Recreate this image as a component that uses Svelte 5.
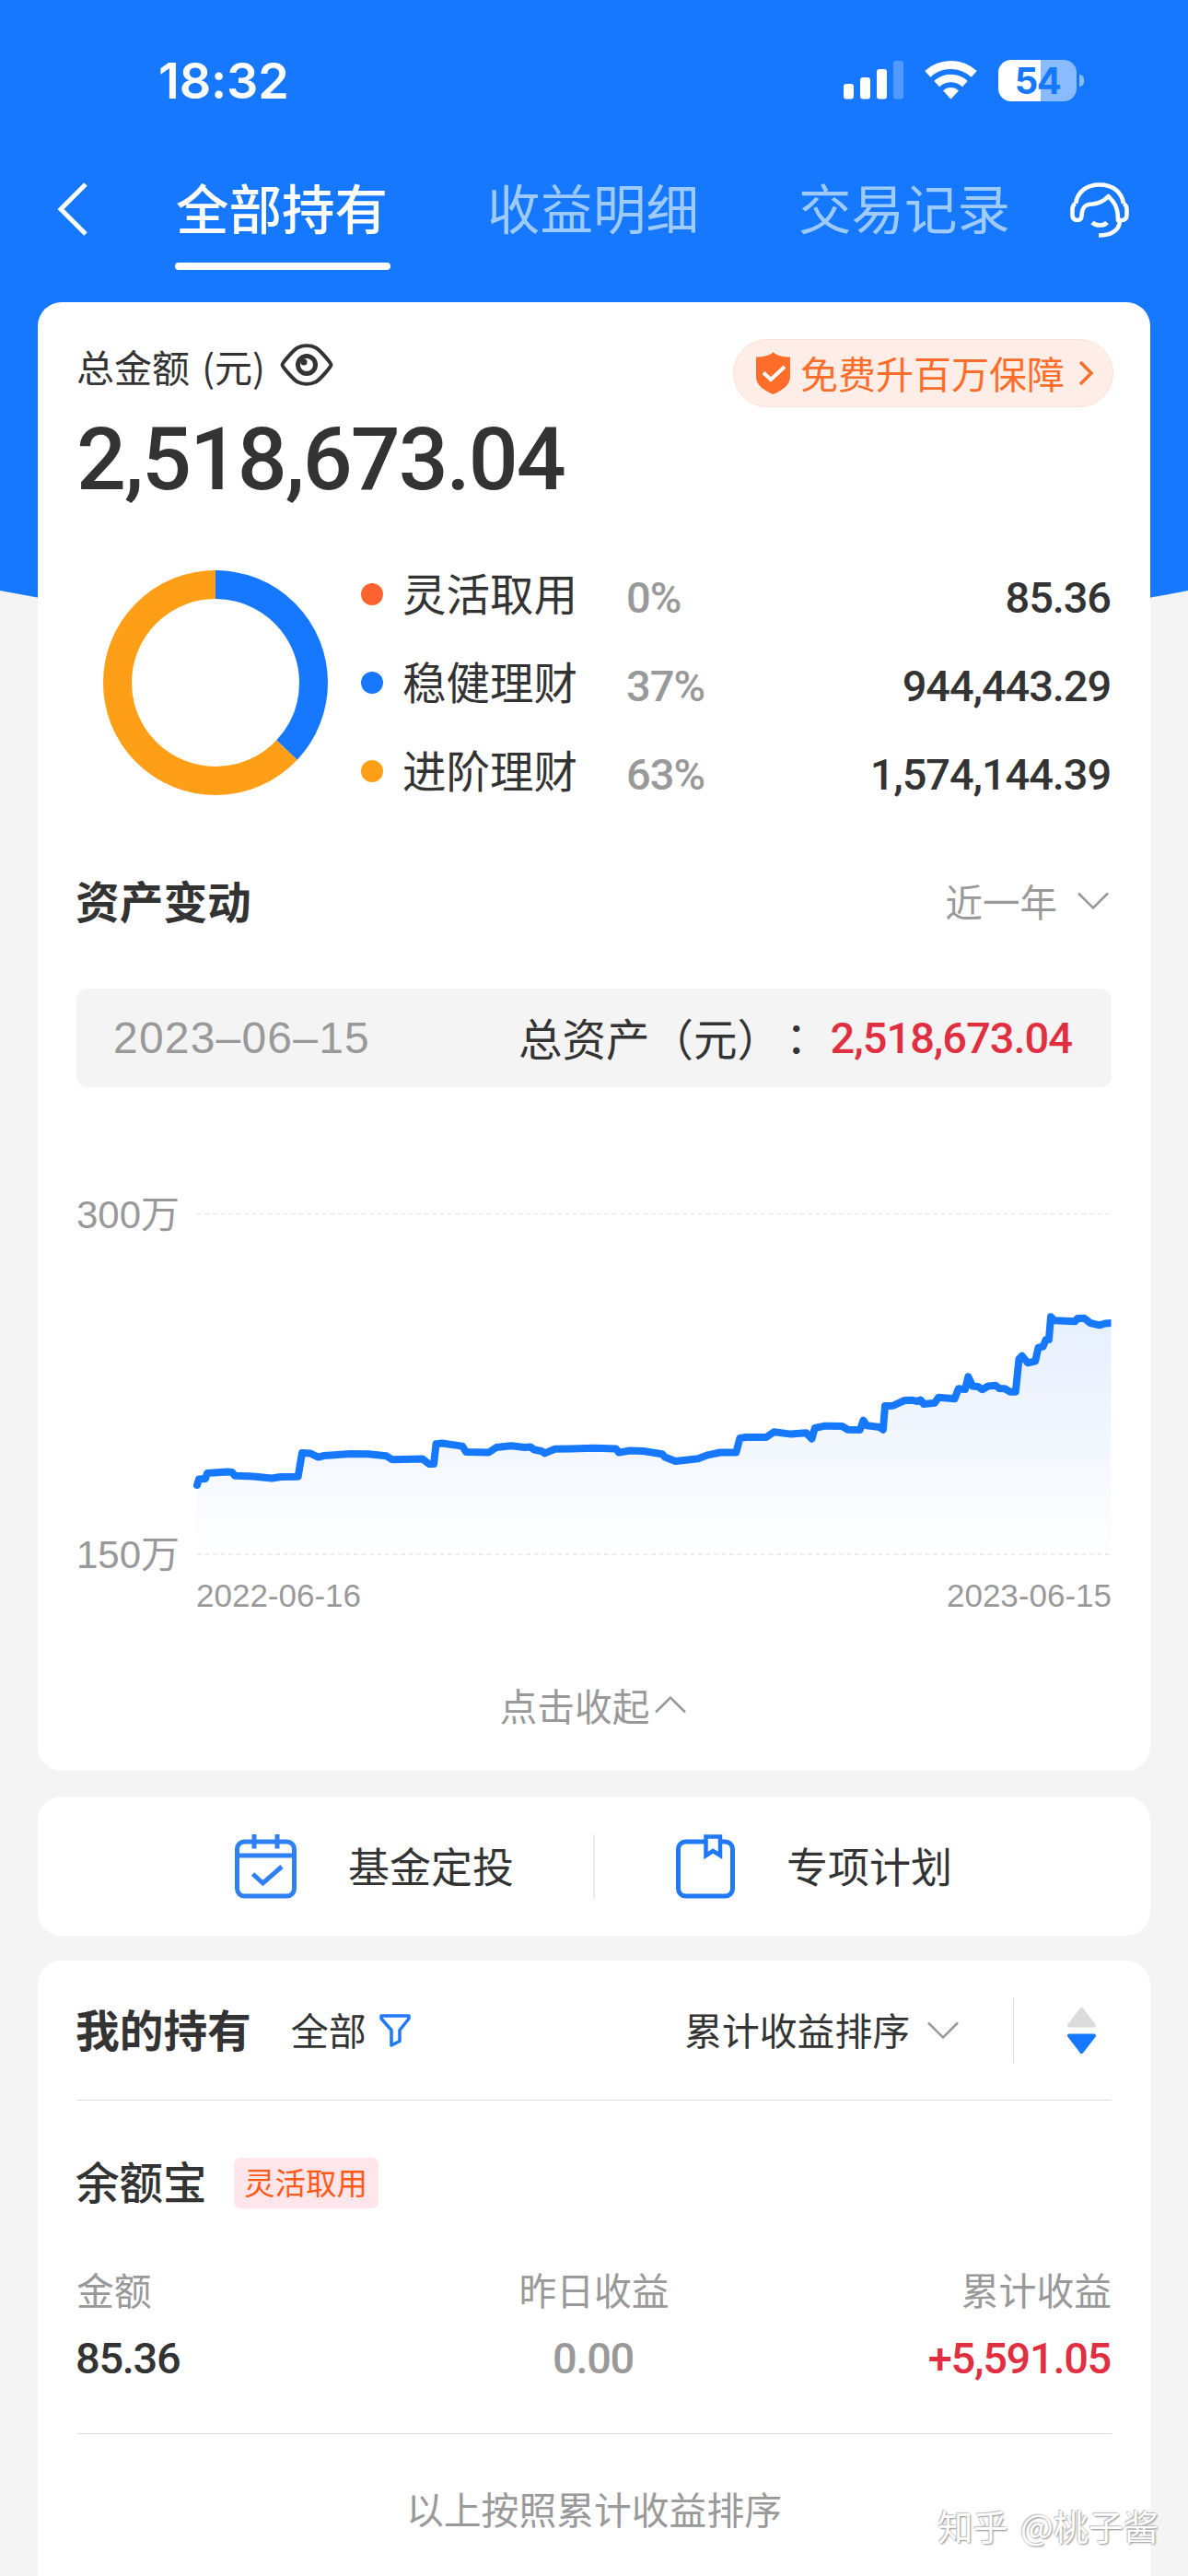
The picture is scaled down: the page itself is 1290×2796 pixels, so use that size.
<script>
  const tabs = ['全部持有', '收益明细', '交易记录'];
  let activeTab = 0;

  const allocation = [
    { name: '灵活取用', percent: 0, amount: '85.36', color: '#ff6430' },
    { name: '稳健理财', percent: 37, amount: '944,443.29', color: '#1677ff' },
    { name: '进阶理财', percent: 63, amount: '1,574,144.39', color: '#ff9f18' }
  ];

  // Donut segments, each one starts where the previous ended
  const radius = 106.5;
  const circumference = 2 * Math.PI * radius;
  let start = 0;
  const segments = allocation.map((item) => {
    const segment = {
      color: item.color,
      length: (item.percent / 100) * circumference,
      offset: -start * circumference
    };
    start += item.percent / 100;
    return segment;
  });

  const trend = [
    [214, 1612], [216, 1605.5], [223, 1605], [225, 1599], [247, 1597.6], [252, 1598], [255, 1601.8],
    [275, 1602.5], [295, 1604.5], [305, 1603], [323.7, 1602.7], [328, 1577], [337, 1577.5], [345.5, 1581.6],
    [352, 1580], [380.5, 1577.9], [400, 1578.3], [419.6, 1580.2], [425.7, 1584.3], [458.7, 1583.4],
    [465.7, 1589], [471, 1589], [473.5, 1567.3], [480, 1566.5], [502, 1569.6], [506, 1576], [530.6, 1576.5],
    [539, 1571], [555, 1569.2], [570, 1571], [576, 1570.5], [580, 1573.5], [588, 1575], [591.5, 1577.4],
    [602.6, 1572.8], [620, 1572.5], [645, 1571.8], [669, 1572.6], [672, 1576.6], [684, 1574.5], [698.5, 1575],
    [719, 1578.3], [722, 1581.5], [733.4, 1586], [758, 1583.3], [768.4, 1579.3], [782, 1576.5], [799.3, 1576.6],
    [803.4, 1561], [810, 1560], [832, 1560], [840.4, 1554.3], [859, 1556.6], [875.4, 1555.3], [881.5, 1561.7],
    [884.8, 1550], [896, 1547.7], [914.4, 1548], [920.6, 1551.7], [933.8, 1552], [937.5, 1541.7], [941, 1547.3],
    [955, 1549], [958.9, 1551.7], [961, 1526], [970, 1525.7], [982.3, 1520], [990, 1519.7], [996, 1521],
    [999.6, 1519.5], [1003, 1524], [1015, 1522.7], [1019.3, 1516.7], [1036.6, 1518.3], [1040.7, 1507.3],
    [1048, 1508], [1051.4, 1494.3], [1056, 1504.5], [1062, 1505], [1066.6, 1508.3], [1073, 1504.5], [1081, 1503.7],
    [1085, 1507], [1091.3, 1507.3], [1096.7, 1510.7], [1102.8, 1510.7], [1106.5, 1475], [1109.8, 1471.7],
    [1116, 1479.3], [1124.2, 1477.3], [1127.5, 1462.7], [1132.5, 1461.7], [1135.7, 1454], [1139, 1454],
    [1141, 1429.3], [1144.8, 1433.3], [1167.4, 1434.3], [1170, 1431], [1177, 1430.7], [1183.9, 1436],
    [1194, 1438.3], [1200, 1436.5], [1207, 1436]
  ];
  const line = trend.map(([x, y]) => `${x},${y}`).join(' ');
  const area = `214,1687 ${line} 1207,1687`;

  const stats = [
    { label: '金额', value: '85.36', tone: '' },
    { label: '昨日收益', value: '0.00', tone: 'muted' },
    { label: '累计收益', value: '+5,591.05', tone: 'up' }
  ];
</script>

<div class="page">
  <svg class="backdrop" viewBox="0 0 1290 710" aria-hidden="true">
    <path d="M0 0H1290V641Q645 767 0 641Z" fill="#1677ff" />
  </svg>

  <header>
    <div class="status-bar">
      <span class="time">18:32</span>
      <div class="status-icons">
        <svg class="signal" viewBox="0 0 65 42" width="65" height="42" fill="#fff">
          <rect x="0" y="25" width="11" height="16.500" rx="3" />
          <rect x="18" y="18" width="11" height="23.500" rx="3" />
          <rect x="36" y="9" width="11" height="32.500" rx="3" />
          <rect x="54" y="0" width="11" height="41.500" rx="3" opacity="0.25" />
        </svg>
        <svg class="wifi" viewBox="0 0 57 42" width="57" height="42" fill="none" stroke="#fff">
          <path d="M3.300 14.400A37 37 0 0 1 53.700 14.400" stroke-width="9" />
          <path d="M13.200 25.100A22.500 22.500 0 0 1 43.800 25.100" stroke-width="8.500" />
          <path d="M28.500 41.500L20 32.400A12.500 12.500 0 0 1 37 32.400Z" fill="#fff" stroke="none" />
        </svg>
        <div class="battery"><span>54</span></div>
      </div>
    </div>

    <nav>
      <svg class="back" viewBox="0 0 34 58" width="34" height="58" fill="none" stroke="#fff" stroke-width="5">
        <path d="M31 2L4 29L31 56" />
      </svg>
      <div class="tabs">
        {#each tabs as tab, i}
          <button class="tab" class:active={activeTab === i} on:click={() => (activeTab = i)}>{tab}</button>
        {/each}
      </div>
      <svg class="service" viewBox="0 0 64 60" width="64" height="60" fill="none" stroke="#fff" stroke-width="4.600" stroke-linejoin="round">
        <path d="M6 23C8 10 18 2.500 32 2.500S56 10 58 23" />
        <path d="M6 23C3 24 2.500 27 2.500 30V35C2.500 39 4 41 8 41C11 41 12.500 39 12.500 36C13 26 17 23.500 24 23.500C32 23 37 20 41.500 15C46 20 52 24 52 41H56C60 41 61.500 39 61.500 35V29C61.500 26 60 24 58 23" />
        <path d="M24 43.500C28 47.500 37 47.500 40 43.500" />
        <path d="M54 41C54 51 46 57.500 31 57.500" />
      </svg>
    </nav>
  </header>

  <main>
    <section class="card overview">
      <div class="total-row">
        <div class="total-label">
          <span>总金额 (元)</span>
          <svg viewBox="0 0 58 46" width="58" height="46" fill="none" stroke="#333" stroke-width="4">
            <path d="M2.500 23C2.500 21 14 7.500 19 4.500C25 1.500 33 1.500 39 4.500C44 7.500 55.500 21 55.500 23S44 38.500 39 41.500C33 44.500 25 44.500 19 41.500C14 38.500 2.500 25 2.500 23Z" />
            <circle cx="29" cy="23" r="9.500" stroke-width="5" />
            <circle cx="26" cy="20" r="3.500" fill="#333" stroke="none" />
          </svg>
        </div>
        <div class="pill">
          <svg viewBox="0 0 37 46" width="37" height="46">
            <path d="M18.500 0C22 4 29 5.500 37 5.500V27C37 36 28 42 18.500 46C9 42 0 36 0 27V5.500C8 5.500 15 4 18.500 0Z" fill="#ff6d2a" />
            <path d="M8 22.500L16 30L31 16" fill="none" stroke="#fff" stroke-width="4" />
          </svg>
          <span>免费升百万保障</span>
          <svg class="pill-arrow" viewBox="0 0 17 28" width="17" height="28" fill="none" stroke="#ff6d2a" stroke-width="3.500">
            <path d="M2 2L14 14L2 26" />
          </svg>
        </div>
      </div>
      <div class="total num">2,518,673.04</div>

      <div class="allocation">
        <svg class="donut" viewBox="0 0 244 244" width="244" height="244" fill="none" stroke-width="31">
          {#each segments as segment}
            <circle
              cx="122"
              cy="122"
              r={radius}
              stroke={segment.color}
              stroke-dasharray="{segment.length} {circumference}"
              stroke-dashoffset={segment.offset}
              transform="rotate(-90 122 122)"
            />
          {/each}
        </svg>
        <ul>
          {#each allocation as item}
            <li>
              <i style="background: {item.color}"></i>
              <span class="name">{item.name}</span>
              <span class="percent num">{item.percent}%</span>
              <span class="amount num">{item.amount}</span>
            </li>
          {/each}
        </ul>
      </div>

      <div class="section-head">
        <h2>资产变动</h2>
        <div class="range">
          <span>近一年</span>
          <svg viewBox="0 0 34 20" width="34" height="20" fill="none" stroke="#999" stroke-width="2.500">
            <path d="M1 1.500L17 17.500L33 1.500" />
          </svg>
        </div>
      </div>

      <div class="snapshot">
        <span class="date">2023–06–15</span>
        <span class="caption">总资产（元）<span class="colon">：</span></span>
        <span class="num red">2,518,673.04</span>
      </div>

      <svg class="chart" viewBox="83 1180 1124 634" width="1124" height="634">
        <defs>
          <linearGradient id="fill" gradientUnits="userSpaceOnUse" x1="0" y1="1430" x2="0" y2="1687">
            <stop offset="0" stop-color="#1668f0" stop-opacity="0.105" />
            <stop offset="1" stop-color="#1668f0" stop-opacity="0.005" />
          </linearGradient>
          <clipPath id="plot"><rect x="200" y="1300" width="1006.500" height="400" /></clipPath>
        </defs>
        <g class="grid">
          <line x1="214" y1="1317.500" x2="1206" y2="1317.500" />
          <line x1="214" y1="1687" x2="1206" y2="1687" />
        </g>
        <g clip-path="url(#plot)">
          <polygon points={area} fill="url(#fill)" />
          <polyline points={line} fill="none" stroke="#1677ff" stroke-width="8" stroke-linejoin="round" stroke-linecap="round" />
        </g>
        <g class="y-axis">
          <text x="83" y="1333">300万</text>
          <text x="83" y="1702">150万</text>
        </g>
        <g class="x-axis">
          <text x="213" y="1744">2022-06-16</text>
          <text x="1207" y="1744" text-anchor="end">2023-06-15</text>
        </g>
      </svg>

      <div class="collapse">
        <span>点击收起</span>
        <svg viewBox="0 0 34 20" width="34" height="20" fill="none" stroke="#999" stroke-width="2.500">
          <path d="M1 18.500L17 2.500L33 18.500" />
        </svg>
      </div>
    </section>

    <section class="card shortcuts">
      <div class="shortcut">
        <svg viewBox="0 0 68 70" width="68" height="70" fill="none" stroke="#2f80f5" stroke-width="5">
          <rect x="2.500" y="8" width="62" height="59" rx="8" />
          <path d="M2.500 23H64.500M21 0V15.500M46 0V15.500" />
          <path d="M19.500 43L30.500 53L51 35" />
        </svg>
        <span>基金定投</span>
      </div>
      <div class="shortcut second">
        <svg viewBox="0 0 65 70" width="65" height="70" fill="none" stroke="#1f78f5" stroke-width="5">
          <path d="M31 8H10.500A8 8 0 0 0 2.500 16V59A8 8 0 0 0 10.500 67H53.500A8 8 0 0 0 61.500 59V16A8 8 0 0 0 53.500 8H50" />
          <path d="M32.500 2.500H48V23L40.200 18L32.500 23Z" stroke-width="4.500" />
        </svg>
        <span>专项计划</span>
      </div>
    </section>

    <section class="card holdings">
      <div class="holdings-head">
        <h2>我的持有</h2>
        <span class="filter">全部</span>
        <svg class="funnel" viewBox="0 0 35 36" width="35" height="36" fill="none" stroke="#1f78f5" stroke-width="3.500" stroke-linejoin="round">
          <path d="M2 2H32V5L22 17.500V29.500L13 34V17.500L2 5Z" />
        </svg>
        <span class="sort">累计收益排序</span>
        <svg class="sort-arrow" viewBox="0 0 34 20" width="34" height="20" fill="none" stroke="#999" stroke-width="2.500">
          <path d="M1 1.500L17 17.500L33 1.500" />
        </svg>
        <svg class="order" viewBox="0 0 32 52" width="32" height="52" stroke-width="4" stroke-linejoin="round">
          <path d="M16 3L29.500 20.500H2.500Z" fill="#dbdbdb" stroke="#dbdbdb" />
          <path d="M16 49L29.500 31.500H2.500Z" fill="#1677ff" stroke="#1677ff" />
        </svg>
      </div>

      <div class="fund">
        <div class="fund-title">
          <h3>余额宝</h3>
          <span class="tag">灵活取用</span>
        </div>
        <div class="stats">
          {#each stats as stat}
            <div class="stat">
              <span class="label">{stat.label}</span>
              <span class="value num {stat.tone}">{stat.value}</span>
            </div>
          {/each}
        </div>
      </div>

      <p class="footnote">以上按照累计收益排序</p>
    </section>
  </main>

  <div class="watermark">知乎 @桃子酱</div>
</div>

<style>
  :global(body) {
    margin: 0;
    background: #f4f4f4;
  }

  .page {
    position: relative;
    width: 1290px;
    height: 2796px;
    overflow: hidden;
    background: #f4f4f4;
    color: #333;
    font-family: 'Noto Sans CJK SC', sans-serif;
  }

  .page * {
    box-sizing: border-box;
  }

  svg {
    display: block;
    flex: none;
  }

  h2,
  h3,
  p,
  ul {
    margin: 0;
    padding: 0;
  }

  .num {
    font-family: Roboto, sans-serif;
    font-weight: 500;
    font-size: 47px;
    letter-spacing: -1px;
  }

  .backdrop {
    position: absolute;
    top: 0;
    left: 0;
    width: 1290px;
    height: 710px;
  }

  header {
    position: relative;
    height: 328px;
  }

  .status-bar {
    display: flex;
    justify-content: space-between;
    align-items: center;
    height: 174px;
    padding: 0 121px 0 172px;
    color: #fff;
  }

  .time {
    font-family: Inter, sans-serif;
    font-size: 54px;
    font-weight: 600;
    letter-spacing: -0.2px;
  }

  .status-icons {
    display: flex;
    align-items: center;
  }

  .wifi {
    margin: 0 23px;
  }

  .battery {
    position: relative;
    width: 85px;
    height: 45px;
    border-radius: 14px;
    background: linear-gradient(90deg, #fff 54%, #8bbbff 54%);
    text-align: center;
  }

  .battery span {
    font: 700 40px/45px Inter, sans-serif;
    letter-spacing: -1.5px;
    color: #1677ff;
  }

  .battery::after {
    content: '';
    position: absolute;
    top: 16px;
    right: -8px;
    width: 5px;
    height: 13px;
    border-radius: 0 5px 5px 0;
    background: #8bbbff;
  }

  nav {
    display: flex;
    align-items: flex-start;
    padding: 2px 64px 0 62px;
  }

  .back {
    margin: 22px 94px 0 0;
  }

  .tabs {
    display: flex;
    align-items: flex-start;
    gap: 104px;
  }

  .tab {
    width: 234px;
    padding: 0;
    border: 0;
    background: none;
    color: #9ecbff;
    font: 400 57.5px/96px 'Noto Sans CJK SC', sans-serif;
    text-indent: -2px;
    white-space: nowrap;
  }

  .tab.active {
    color: #fff;
    font-weight: 500;
  }

  .tab.active::after {
    content: '';
    display: block;
    height: 8px;
    margin-top: 13px;
    border-radius: 4px;
    background: #fff;
  }

  .service {
    margin: 22px 0 0 62px;
  }

  main {
    position: relative;
    padding: 0 41px;
  }

  .card {
    padding: 0 42px;
    border-radius: 26px;
    background: #fff;
  }

  .overview {
    height: 1594px;
    padding-top: 40px;
  }

  .total-row {
    display: flex;
    justify-content: space-between;
    align-items: flex-start;
    height: 74px;
  }

  .total-label {
    display: flex;
    align-items: center;
    gap: 16px;
    height: 58px;
    font-size: 41px;
    word-spacing: 4px;
  }

  .total-label svg {
    margin-top: -3px;
  }

  .pill {
    display: flex;
    align-items: center;
    width: 413px;
    height: 74px;
    margin-right: -2px;
    padding-left: 24px;
    border: 1px solid #fde0d6;
    border-radius: 37px;
    background: #ffede7;
    color: #ff6d2a;
    font-size: 41px;
  }

  .pill span {
    margin: -3px 15px 0 11px;
  }

  .total {
    height: 110px;
    font-size: 95px;
    line-height: 114px;
    letter-spacing: -2.1px;
  }

  .allocation {
    display: flex;
    align-items: center;
    height: 288px;
    margin-top: 45px;
    padding-left: 29px;
  }

  ul {
    flex: 1;
    margin-left: 36px;
    list-style: none;
  }

  li {
    display: flex;
    align-items: center;
    height: 96px;
  }

  li i {
    width: 24px;
    height: 24px;
    border-radius: 50%;
  }

  .name {
    width: 243px;
    margin: -6px 0 0 21px;
    font-size: 47.5px;
  }

  .percent {
    color: #999;
  }

  .percent,
  .amount {
    padding-top: 6px;
  }

  .amount {
    margin: 0 1px 0 auto;
    letter-spacing: -1.1px;
  }

  .section-head {
    display: flex;
    justify-content: space-between;
    align-items: center;
    height: 72px;
    margin-top: 57px;
  }

  h2 {
    margin: -4px 0 0 -1px;
    font-size: 47.7px;
    font-weight: 700;
  }

  .range {
    display: flex;
    align-items: center;
    gap: 22px;
    padding-right: 3px;
    color: #999;
    font-size: 40.5px;
  }

  .range span {
    margin-top: -2px;
  }

  .snapshot {
    display: flex;
    align-items: center;
    height: 107px;
    margin-top: 59px;
    padding: 0 43px 0 40px;
    border-radius: 12px;
    background: #f4f4f4;
  }

  .date {
    color: #999;
    font-family: 'Liberation Sans', sans-serif;
    font-size: 48px;
    letter-spacing: 1.2px;
  }

  .caption {
    margin: -3px 6px 0 auto;
    font-family: 'Noto Sans CJK TC', sans-serif;
    font-size: 47.5px;
    font-feature-settings: 'chws' 0, 'halt' 0;
    text-spacing-trim: space-all;
  }

  .colon {
    margin: 0 7px 0 -7px;
  }

  .red,
  .up {
    color: #e02f41;
  }

  .grid line {
    stroke: #e8e8e8;
    stroke-width: 1.5;
    stroke-dasharray: 5 3.5;
  }

  .y-axis,
  .x-axis {
    fill: #999;
    font-family: 'Liberation Sans', 'Noto Sans CJK SC', sans-serif;
    font-size: 42px;
  }

  .x-axis {
    font-size: 35px;
  }

  .collapse {
    display: flex;
    justify-content: center;
    align-items: center;
    gap: 5px;
    height: 72px;
    padding-right: 3px;
    color: #999;
    font-size: 40.8px;
  }

  .shortcuts {
    display: flex;
    align-items: center;
    height: 151px;
    margin-top: 28px;
    padding: 0;
    font-size: 45px;
  }

  .shortcut {
    display: flex;
    align-items: center;
    gap: 55px;
    width: 603px;
    height: 70px;
    padding-left: 214px;
  }

  .shortcut.second {
    padding-left: 88px;
    border-left: 2px solid #ececec;
  }

  .shortcut span {
    margin-top: -3px;
  }

  .holdings {
    height: 720px;
    margin-top: 27px;
  }

  .holdings-head {
    display: flex;
    align-items: center;
    height: 152px;
    border-bottom: 1.5px solid #dedede;
  }

  .filter {
    margin: -3px 14px 0 43px;
    font-size: 41px;
  }

  .sort {
    margin: -3px 19px 0 auto;
    font-size: 40.8px;
  }

  .sort-arrow {
    margin-right: 59px;
  }

  .order {
    width: 107px;
    height: 70px;
    padding: 9px 16px 9px 57px;
    border-left: 1.5px solid #dedede;
  }

  .fund {
    padding: 62px 0 51px;
    border-bottom: 1.5px solid #dedede;
  }

  .fund-title {
    display: flex;
    align-items: center;
    gap: 29px;
    height: 55px;
  }

  h3 {
    margin: -7px 0 0 -1px;
    font-size: 47.5px;
    font-weight: 500;
  }

  .tag {
    width: 157px;
    border-radius: 7px;
    background: #ffe6ea;
    color: #ff5a1a;
    font-size: 33.5px;
    line-height: 52px;
    height: 55px;
    text-align: center;
  }

  .stats {
    display: grid;
    grid-template-columns: repeat(3, 1fr);
    margin-top: 58px;
  }

  .stat {
    display: flex;
    flex-direction: column;
    gap: 15px;
    line-height: 60px;
  }

  .stat:nth-child(2) {
    align-items: center;
  }

  .stat:nth-child(3) {
    align-items: flex-end;
  }

  .label {
    color: #999;
    font-size: 40.8px;
  }

  .value {
    margin: 0 1px 0 -1px;
    letter-spacing: -1.3px;
  }

  .muted {
    color: #999;
  }

  .footnote {
    color: #999;
    font-size: 40.8px;
    line-height: 162px;
    text-align: center;
  }

  .watermark {
    position: absolute;
    right: 32px;
    bottom: 28px;
    color: #fff;
    font-size: 38px;
    word-spacing: 5px;
    text-shadow: -1px -1px 1px #bbb, 1px 1px 2px #888;
    white-space: nowrap;
  }
</style>
